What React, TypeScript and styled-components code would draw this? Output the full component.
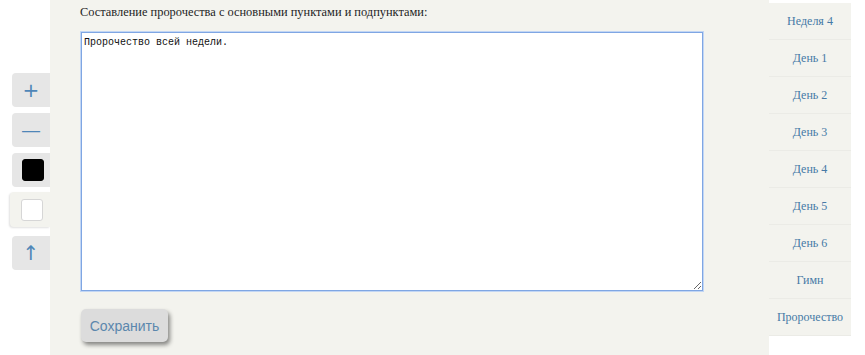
import React, { useState } from 'react';
import styled, { createGlobalStyle } from 'styled-components';

const GlobalStyle = createGlobalStyle`
    html, body {
        margin: 0;
        padding: 0;
        background: #ffffff;
    }
`;

const Page = styled.div`
    display: flex;
    width: 865px;
    height: 355px;
    overflow: hidden;
`;

const ToolColumn = styled.div`
    width: 50px;
    flex-shrink: 0;
    display: flex;
    flex-direction: column;
    align-items: flex-end;
    padding-top: 73px;
    box-sizing: border-box;
`;

const ToolButton = styled.button<{ $active?: boolean; $gap?: number }>`
    width: ${(p) => (p.$active ? 40 : 38)}px;
    height: ${(p) => (p.$active ? 35 : 34)}px;
    margin-bottom: ${(p) => p.$gap ?? 6}px;
    border: none;
    border-radius: 4px 0 0 4px;
    background: ${(p) => (p.$active ? '#f3f3ee' : '#e6e6e6')};
    box-shadow: ${(p) => (p.$active ? '-1px 1px 2px rgba(0, 0, 0, 0.12)' : 'none')};
    color: #4f86b8;
    font-family: 'DejaVu Sans', sans-serif;
    font-size: 20px;
    line-height: 1;
    padding: 0;
    display: flex;
    align-items: center;
    justify-content: center;
    cursor: pointer;
`;

const Swatch = styled.span<{ $color: string }>`
    width: 20px;
    height: 20px;
    border-radius: 3px;
    background: ${(p) => p.$color};
    border: 1px solid ${(p) => (p.$color === '#000' ? '#000' : '#d6d6d6')};
    margin-left: 3px;
`;

const Main = styled.div`
    width: 719px;
    flex-shrink: 0;
    background: #f3f3ee;
    padding: 5px 0 0 30px;
    box-sizing: border-box;
`;

const Heading = styled.div`
    font-family: 'Liberation Serif', serif;
    font-size: 12.4px;
    color: #1e1e1e;
    height: 27px;
`;

const Editor = styled.textarea`
    display: block;
    width: 622px;
    height: 259px;
    margin-left: 1px;
    box-sizing: border-box;
    border: 1px solid #7fa6e3;
    box-shadow: 0 0 0 1px #c2d6f4;
    outline: none;
    padding: 4px 2px;
    resize: both;
    font-family: 'Liberation Mono', monospace;
    font-size: 10px;
    color: #111;
    background: #fff;
`;

const SaveButton = styled.button`
    margin: 18px 0 0 1px;
    width: 87px;
    height: 33px;
    border: none;
    border-radius: 5px;
    background: #dcdcdc;
    box-shadow: 2px 3px 4px rgba(0, 0, 0, 0.45);
    color: #5b87ad;
    font-family: 'Liberation Sans', sans-serif;
    font-size: 14px;
    cursor: pointer;
`;

const Nav = styled.nav`
    width: 82px;
    flex-shrink: 0;
    margin-top: 3px;
    align-self: flex-start;
    display: flex;
    flex-direction: column;
    background: #f3f3ee;
`;

const NavItem = styled.a`
    height: 37px;
    display: flex;
    align-items: center;
    justify-content: center;
    border-bottom: 1px solid #ebebe6;
    box-sizing: border-box;
    font-family: 'Liberation Serif', serif;
    font-size: 12px;
    font-weight: normal;
    color: #467aa6;
    text-decoration: none;
    cursor: pointer;
`;

const navItems = ['Неделя 4', 'День 1', 'День 2', 'День 3', 'День 4', 'День 5', 'День 6', 'Гимн', 'Пророчество'];

const App: React.FC = () => {
    const [text, setText] = useState('Пророчество всей недели.');
    const [color, setColor] = useState('#fff');

    return (
        <>
            <GlobalStyle />
            <Page>
                <ToolColumn>
                    <ToolButton>+</ToolButton>
                    <ToolButton>—</ToolButton>
                    <ToolButton $active={color === '#000'} $gap={5} onClick={() => setColor('#000')}>
                        <Swatch $color="#000" />
                    </ToolButton>
                    <ToolButton $active={color === '#fff'} $gap={9} onClick={() => setColor('#fff')}>
                        <Swatch $color="#fff" />
                    </ToolButton>
                    <ToolButton>↑</ToolButton>
                </ToolColumn>
                <Main>
                    <Heading>Составление пророчества с основными пунктами и подпунктами:</Heading>
                    <Editor value={text} onChange={(e) => setText(e.target.value)} />
                    <SaveButton>Сохранить</SaveButton>
                </Main>
                <Nav>
                    {navItems.map((item) => (
                        <NavItem key={item}>{item}</NavItem>
                    ))}
                </Nav>
            </Page>
        </>
    );
};

export default App;
